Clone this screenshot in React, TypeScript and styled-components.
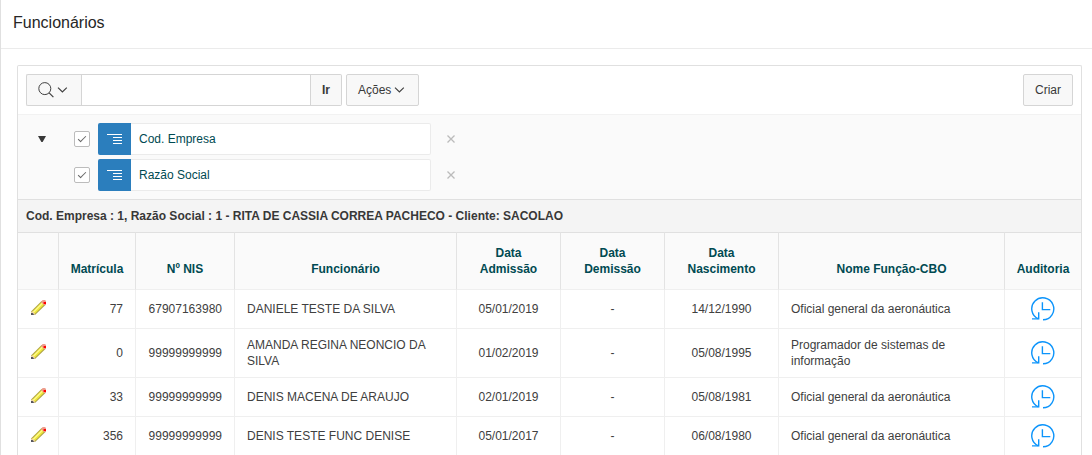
import React from "react";
import styled, { createGlobalStyle, css } from "styled-components";

const GlobalStyle = createGlobalStyle`
  *, *::before, *::after { box-sizing: border-box; }
  body {
    margin: 0;
    background: #fff;
    color: #404040;
    font: 12px/16px "Liberation Sans", Arial, sans-serif;
  }
  button, input { font: inherit; color: inherit; }
`;

const Page = styled.div`
  min-height: 100vh;
  border-left: 1px solid #e0e0e0;
`;

const TitleBar = styled.header`
  display: flex;
  align-items: center;
  height: 49px;
  padding: 0 12px 2px;
  border-bottom: 1px solid #ebebeb;
`;

const Title = styled.h1`
  margin: 0;
  font-size: 16px;
  line-height: 24px;
  font-weight: 400;
  color: #262626;
`;

const Report = styled.main`
  margin: 16px 10px 0 16px;
  border: 1px solid #e0e0e0;
  border-bottom: 0;
  border-radius: 2px 2px 0 0;
`;

const Toolbar = styled.div`
  display: flex;
  gap: 4px;
  padding: 8px;
`;

const SearchGroup = styled.form`
  display: flex;
`;

const Button = styled.button<{ $side?: "left" | "right"; $bold?: boolean; $push?: boolean }>`
  display: inline-flex;
  align-items: center;
  justify-content: center;
  gap: 3px;
  height: 32px;
  padding: 0 11px;
  border: 1px solid #d5d5d5;
  border-radius: 2px;
  background: #f8f8f8;
  color: #383838;
  ${(p) => p.$bold && css`font-weight: 700;`}
  ${(p) => p.$push && css`margin-left: auto;`}
  ${(p) => p.$side === "left" && css`border-right: 0; border-radius: 2px 0 0 2px;`}
  ${(p) => p.$side === "right" && css`border-left: 0; border-radius: 0 2px 2px 0;`}
`;

const SearchInput = styled.input`
  width: 230px;
  height: 32px;
  padding: 0 8px;
  border: 1px solid #d5d5d5;
  background: #fff;
  outline: 0;
`;

const Controls = styled.section`
  display: flex;
  align-items: flex-start;
  padding: 8px;
  border-top: 1px solid #f2f2f2;
  background: #fafafa;
`;

const Toggle = styled.button`
  display: grid;
  place-items: center;
  width: 32px;
  height: 32px;
  margin-right: 16px;
  padding: 0;
  border: 0;
  background: none;
`;

const FilterList = styled.ul`
  display: grid;
  gap: 4px;
  margin: 0;
  padding: 0;
  list-style: none;
`;

const FilterItem = styled.li`
  display: flex;
  align-items: center;
  gap: 8px;
`;

const Check = styled.input`
  appearance: none;
  display: grid;
  place-items: center;
  width: 16px;
  height: 16px;
  margin: 0;
  border: 1px solid #bcbcbc;
  border-radius: 2px;
  background: #fff;
  &:checked::before {
    content: "";
    width: 8px;
    height: 4px;
    margin-bottom: 2px;
    border: solid #666;
    border-width: 0 0 1px 1px;
    rotate: -45deg;
  }
`;

const FilterName = styled.label`
  display: flex;
  align-items: center;
  width: 333px;
  height: 32px;
  border: 1px solid #ebebeb;
  border-left: 0;
  border-radius: 2px;
  background: #fff;
  color: #004a52;
`;

const FilterIcon = styled.span`
  display: grid;
  place-items: center;
  width: 33px;
  height: 32px;
  margin-right: 8px;
  border-radius: 2px 0 0 2px;
  background: #2b7ebd;
`;

const RemoveButton = styled.button`
  display: grid;
  place-items: center;
  width: 24px;
  height: 24px;
  padding: 0;
  border: 0;
  background: none;
`;

const GroupHeading = styled.h2`
  margin: 0;
  padding: 8px;
  border-top: 1px solid #e0e0e0;
  background: #f4f4f4;
  font-size: 12px;
  line-height: 16px;
  font-weight: 700;
  color: #383838;
`;

const Table = styled.table`
  width: 100%;
  table-layout: fixed;
  border-collapse: separate;
  border-spacing: 0;
`;

const Column = styled.col<{ $width?: number }>`
  ${(p) => p.$width && css`width: ${p.$width}px;`}
`;

const HeadCell = styled.th`
  padding: 12px 11px;
  border-top: 1px solid #e0e0e0;
  border-bottom: 1px solid #efefef;
  background: #fafafa;
  vertical-align: bottom;
  font-weight: 700;
  color: #004a52;
  & + & { border-left: 1px solid #e3e3e3; }
`;

const Cell = styled.td<{ $align?: "center" | "right" }>`
  height: 39px;
  padding: 8px 12px;
  border-bottom: 1px solid #efefef;
  text-align: ${(p) => p.$align ?? "left"};
  & + & { border-left: 1px solid #efefef; }
  tr:last-child > & { height: 38px; border-bottom: 0; }
`;

const IconCell = styled(Cell)`
  padding: 0;
  text-align: center;
`;

const IconLink = styled.a`
  display: inline-block;
  vertical-align: middle;
  svg { display: block; }
`;

const EditLink = styled(IconLink)`
  padding-bottom: 2px;
`;

const SearchIcon = () => (
  <svg width="16" height="16" viewBox="0 0 16 16" fill="none" stroke="#404040" aria-hidden="true">
    <circle cx="6.8" cy="6.6" r="6" />
    <path d="M11.1 10.9 15.4 15.2" strokeWidth="1.2" />
  </svg>
);

const ChevronIcon = () => (
  <svg width="13" height="16" viewBox="0 0 13 16" fill="none" stroke="#404040" strokeWidth="1.2" aria-hidden="true">
    <path d="M1 5.6 5.4 9.9 9.8 5.6" />
  </svg>
);

const TriangleIcon = () => (
  <svg width="8" height="6" viewBox="0 0 8 6" aria-hidden="true">
    <path d="M0 0H8L4.6 6H3.4Z" fill="#383838" />
  </svg>
);

const BreakIcon = () => (
  <svg width="15" height="12" viewBox="0 0 15 12" fill="none" stroke="#fff" aria-hidden="true">
    <path d="M0 1.5H15M6 4.5H15M6 7.5H15M6 10.5H15" />
  </svg>
);

const RemoveIcon = () => (
  <svg width="8" height="8" viewBox="0 0 8 8" fill="none" stroke="#bbb" strokeWidth="1.3" aria-hidden="true">
    <path d="M0.5 0.5 7.5 7.5M7.5 0.5 0.5 7.5" />
  </svg>
);

const PencilIcon = () => (
  <svg width="16" height="16" viewBox="0 0 16 16" aria-hidden="true">
    <path d="M1 15V11.6L11.6 1H13L16 4V4.6L5 15Z" fill="#b0a548" />
    <path d="M2 12 11.7 2.3 14 4.7 4.6 14.1Z" fill="#eee83a" />
    <path d="M2.6 12.1 12.1 2.6 13 3.5 3.5 13Z" fill="#fffa8c" />
    <path d="M1 15V11.9L2.4 11.3 5 13.8 4.4 15Z" fill="#eed3a6" />
    <path d="M1 15V13H2.6L3.8 14.2V15Z" fill="#55555e" />
    <path d="M11 2 12.6 0H15L16 1V4.6L14.5 5.6Z" fill="#ee9c8c" />
    <path d="M13.6 2H16V4H13.6Z" fill="#f00" />
  </svg>
);

const HistoryIcon = () => (
  <svg width="24" height="24" viewBox="0 0 24 24" fill="none" stroke="#0c94fb" strokeWidth="1.4" aria-hidden="true">
    <path d="M7.4 21.9A11 11 0 1 1 12 22.8" />
    <path d="M7.7 15.3V21.9H1" />
    <path d="M11.4 5.2V12.6H19.3" />
  </svg>
);

const columns: { label: string; width?: number }[] = [
  { label: "", width: 40 },
  { label: "Matrícula", width: 77 },
  { label: "Nº NIS", width: 99 },
  { label: "Funcionário", width: 222 },
  { label: "Data Admissão", width: 104 },
  { label: "Data Demissão", width: 104 },
  { label: "Data Nascimento", width: 114 },
  { label: "Nome Função-CBO" },
  { label: "Auditoria", width: 77 },
];

const employees = [
  { id: "77", nis: "67907163980", name: "DANIELE TESTE DA SILVA", hired: "05/01/2019", born: "14/12/1990", job: "Oficial general da aeronáutica" },
  { id: "0", nis: "99999999999", name: "AMANDA REGINA NEONCIO DA SILVA", hired: "01/02/2019", born: "05/08/1995", job: "Programador de sistemas de informação" },
  { id: "33", nis: "99999999999", name: "DENIS MACENA DE ARAUJO", hired: "02/01/2019", born: "05/08/1981", job: "Oficial general da aeronáutica" },
  { id: "356", nis: "99999999999", name: "DENIS TESTE FUNC DENISE", hired: "05/01/2017", born: "06/08/1980", job: "Oficial general da aeronáutica" },
];

const filters = [
  { id: "cod-empresa", label: "Cod. Empresa" },
  { id: "razao-social", label: "Razão Social" },
];

export default function App() {
  return (
    <Page>
      <GlobalStyle />
      <TitleBar>
        <Title>Funcionários</Title>
      </TitleBar>
      <Report>
        <Toolbar>
          <SearchGroup onSubmit={(e) => e.preventDefault()}>
            <Button type="button" $side="left" aria-label="Selecionar colunas">
              <SearchIcon />
              <ChevronIcon />
            </Button>
            <SearchInput type="text" aria-label="Pesquisar" />
            <Button type="submit" $side="right" $bold>Ir</Button>
          </SearchGroup>
          <Button type="button">
            Ações
            <ChevronIcon />
          </Button>
          <Button type="button" $push>Criar</Button>
        </Toolbar>
        <Controls>
          <Toggle type="button" aria-label="Recolher filtros">
            <TriangleIcon />
          </Toggle>
          <FilterList>
            {filters.map((f) => (
              <FilterItem key={f.id}>
                <Check type="checkbox" id={f.id} defaultChecked />
                <FilterName htmlFor={f.id}>
                  <FilterIcon>
                    <BreakIcon />
                  </FilterIcon>
                  {f.label}
                </FilterName>
                <RemoveButton type="button" aria-label={`Remover ${f.label}`}>
                  <RemoveIcon />
                </RemoveButton>
              </FilterItem>
            ))}
          </FilterList>
        </Controls>
        <GroupHeading>
          Cod. Empresa : 1, Razão Social : 1 - RITA DE CASSIA CORREA PACHECO - Cliente: SACOLAO
        </GroupHeading>
        <Table>
          <colgroup>
            {columns.map((c) => (
              <Column key={c.label} $width={c.width} />
            ))}
          </colgroup>
          <thead>
            <tr>
              {columns.map((c) => (
                <HeadCell key={c.label} scope="col">{c.label}</HeadCell>
              ))}
            </tr>
          </thead>
          <tbody>
            {employees.map((e) => (
              <tr key={e.id}>
                <IconCell>
                  <EditLink href="#editar" aria-label={`Editar ${e.name}`}>
                    <PencilIcon />
                  </EditLink>
                </IconCell>
                <Cell $align="right">{e.id}</Cell>
                <Cell $align="right">{e.nis}</Cell>
                <Cell>{e.name}</Cell>
                <Cell $align="center">{e.hired}</Cell>
                <Cell $align="center">-</Cell>
                <Cell $align="center">{e.born}</Cell>
                <Cell>{e.job}</Cell>
                <IconCell>
                  <IconLink href="#auditoria" aria-label={`Auditoria de ${e.name}`}>
                    <HistoryIcon />
                  </IconLink>
                </IconCell>
              </tr>
            ))}
          </tbody>
        </Table>
      </Report>
    </Page>
  );
}
